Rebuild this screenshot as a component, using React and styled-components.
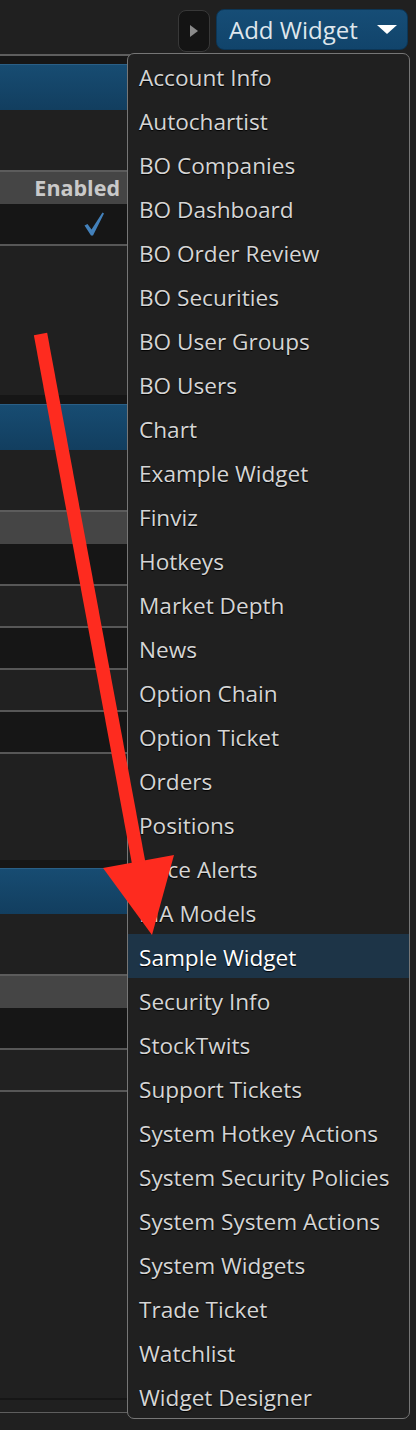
import React from "react";
import styled, { createGlobalStyle } from "styled-components";

const GlobalStyle = createGlobalStyle`
  html, body { margin: 0; padding: 0; background: #202020; }
  body { font-family: "Open Sans", "Noto Sans", sans-serif; }
  * { box-sizing: border-box; }
`;

const Page = styled.div`
  position: relative;
  width: 416px;
  height: 1430px;
  overflow: hidden;
  background: #202020;
`;

const TopBar = styled.div`
  height: 54px;
  display: flex;
  justify-content: flex-end;
  align-items: flex-start;
  gap: 6px;
  padding: 9px 8px 0 0;
`;

const ScrollButton = styled.div`
  width: 32px;
  height: 42px;
  margin-top: 1px;
  border: 1px solid #383838;
  border-radius: 8px;
  background: #141414;
  display: flex;
  align-items: center;
  justify-content: center;
`;

const AddButton = styled.div`
  width: 192px;
  height: 41px;
  border-radius: 8px;
  border: 1px solid #0c3656;
  background: linear-gradient(#164d76, #11446b);
  display: flex;
  align-items: center;
  justify-content: space-between;
  padding: 0 10px 0 12px;
  color: #dfe6ec;
  font-size: 24px;
  line-height: 1;
`;

const Panel = styled.div`
  width: 130px;
  border-top: 2px solid #5e5e5e;
  border-bottom: 1px solid #5e5e5e;
`;

const Section = styled.div`
  height: ${(p) => p.$height}px;
  display: flex;
  flex-direction: column;
`;

const Strip = styled.div`
  height: ${(p) => p.$h}px;
  background: #161616;
  flex: none;
`;

const TitleBar = styled.div`
  height: 46px;
  flex: none;
  border-top: 1px solid #2a5f86;
  background: linear-gradient(#174c72, #123e5f);
`;

const Toolbar = styled.div`
  height: 60px;
  flex: none;
  background: #202020;
`;

const Table = styled.div`
  border-top: 2px solid #5c5c5c;
  flex: none;
`;

const HeaderRow = styled.div`
  height: 32px;
  background: #454545;
  display: grid;
  grid-template-columns: 126px 1fr;
`;

const HeaderCell = styled.div`
  text-align: right;
  padding-right: 6px;
  font-weight: 700;
  font-size: 21.5px;
  line-height: 32px;
  color: #c9c9c9;
`;

const Row = styled.div`
  height: 42px;
  background: ${(p) => (p.$alt ? "#212121" : "#161616")};
  border-bottom: 2px solid #575757;
  display: grid;
  grid-template-columns: 126px 1fr;
`;

const CheckCell = styled.div`
  display: flex;
  justify-content: flex-end;
  align-items: center;
  padding-right: 22px;
`;

const Filler = styled.div`
  flex: 1;
  background: #202020;
`;

const Footer = styled.div`
  height: 14px;
  border-top: 2px solid #161616;
  background: #202020;
`;

const Dropdown = styled.div`
  position: absolute;
  top: 53px;
  left: 127px;
  width: 283px;
  border: 1px solid #767676;
  border-radius: 7px;
  background: #202020;
  overflow: hidden;
`;

const Item = styled.div`
  height: 44px;
  padding: 4px 0 0 11px;
  line-height: 40px;
  font-size: 22.6px;
  white-space: nowrap;
  color: ${(p) => (p.$active ? "#ffffff" : "#d5d5d5")};
  background: ${(p) => (p.$active ? "#1d3447" : "transparent")};
  text-shadow: 0 1px 1px #000;
`;

const ArrowLayer = styled.svg`
  position: absolute;
  top: 0;
  left: 0;
  pointer-events: none;
`;

const items = [
  "Account Info",
  "Autochartist",
  "BO Companies",
  "BO Dashboard",
  "BO Order Review",
  "BO Securities",
  "BO User Groups",
  "BO Users",
  "Chart",
  "Example Widget",
  "Finviz",
  "Hotkeys",
  "Market Depth",
  "News",
  "Option Chain",
  "Option Ticket",
  "Orders",
  "Positions",
  "Price Alerts",
  "RIA Models",
  "Sample Widget",
  "Security Info",
  "StockTwits",
  "Support Tickets",
  "System Hotkey Actions",
  "System Security Policies",
  "System System Actions",
  "System Widgets",
  "Trade Ticket",
  "Watchlist",
  "Widget Designer",
];

const sections = [
  { height: 339, strip: 8, rows: 1, check: true },
  { height: 465, strip: 9, rows: 5 },
  { height: 538, strip: 8, rows: 2 },
];

const Check = () => (
  <svg width="20" height="24" viewBox="0 0 20 24">
    <path d="M0.5 13.5 L3.5 12 L7.5 17.5 L18.5 0.5 L20 1.5 L9 23.5 L7 23.5 Z" fill="#4381bb" />
  </svg>
);

export default function App() {
  return (
    <Page>
      <GlobalStyle />
      <TopBar>
        <ScrollButton>
          <svg width="8" height="12" viewBox="0 0 8 12">
            <path d="M0 0 L8 6 L0 12 Z" fill="#8a8a8a" />
          </svg>
        </ScrollButton>
        <AddButton>
          <span>Add Widget</span>
          <svg width="20" height="9" viewBox="0 0 20 9">
            <path d="M0 0 L20 0 L10 9 Z" fill="#ffffff" />
          </svg>
        </AddButton>
      </TopBar>
      <Panel>
        {sections.map((s, i) => (
          <Section key={i} $height={s.height}>
            <Strip $h={s.strip} />
            <TitleBar />
            <Toolbar />
            <Table>
              <HeaderRow>
                <HeaderCell>{i === 0 ? "Enabled" : ""}</HeaderCell>
              </HeaderRow>
              {Array.from({ length: s.rows }).map((_, r) => (
                <Row key={r} $alt={r % 2 === 1}>
                  <CheckCell>{s.check ? <Check /> : null}</CheckCell>
                </Row>
              ))}
            </Table>
            <Filler />
          </Section>
        ))}
        <Footer />
      </Panel>
      <Dropdown>
        {items.map((t) => (
          <Item key={t} $active={t === "Sample Widget"}>
            {t}
          </Item>
        ))}
      </Dropdown>
      <ArrowLayer width="416" height="1430" viewBox="0 0 416 1430">
        <line x1="40.5" y1="334" x2="140" y2="870" stroke="#fe2b1f" strokeWidth="13.5" />
        <polygon points="152,935 103,868 174,855" fill="#fe2b1f" />
      </ArrowLayer>
    </Page>
  );
}
